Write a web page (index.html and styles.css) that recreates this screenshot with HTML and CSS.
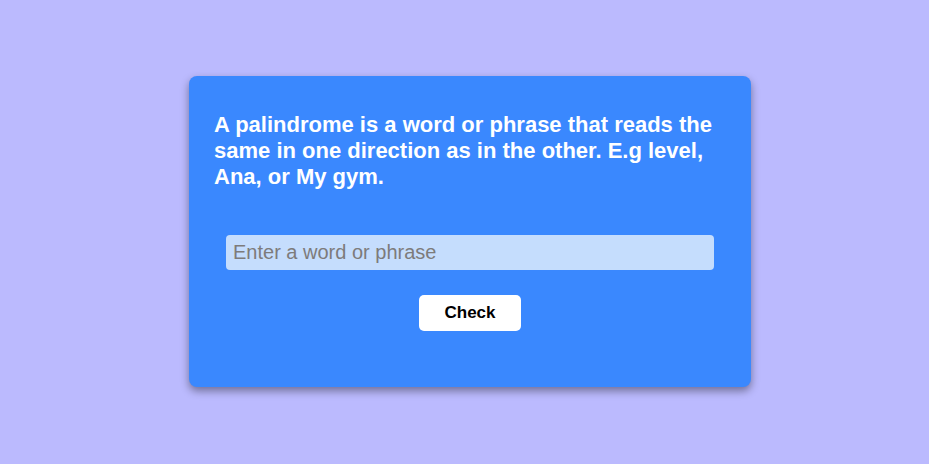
FILE: index.html
```html
<!DOCTYPE html>
<html>
<head>
<meta charset="utf-8">
<link rel="stylesheet" href="styles.css">
</head>
<body>
<div class="card">
  <p class="intro">A palindrome is a word or phrase that reads the same in one direction as in the other. E.g level, Ana, or My gym.</p>
  <input class="word-input" type="text" placeholder="Enter a word or phrase">
  <button class="check-btn">Check</button>
</div>
</body>
</html>
```
FILE: styles.css
```css
html, body {
  margin: 0;
  padding: 0;
  height: 100%;
}
body {
  background: #bbbafe;
  font-family: "Liberation Sans", Arial, sans-serif;
  display: flex;
  justify-content: center;
  align-items: flex-start;
  padding-left: 11px;
  box-sizing: border-box;
}
.card {
  margin-top: 76px;
  width: 562px;
  height: 311px;
  box-sizing: border-box;
  background: #3a88fe;
  border-radius: 8px;
  box-shadow: 0 4px 9px rgba(0, 0, 0, 0.4);
  padding: 36px 25px 0 25px;
  display: flex;
  flex-direction: column;
  align-items: center;
}
.intro {
  margin: 0;
  align-self: stretch;
  color: #ffffff;
  font-weight: bold;
  font-size: 22px;
  line-height: 26px;
}
.word-input {
  margin-top: 45px;
  width: 488px;
  height: 35px;
  box-sizing: border-box;
  border: none;
  outline: none;
  border-radius: 4px;
  background: #c5ddfd;
  padding: 0 7px;
  font-family: "Liberation Sans", Arial, sans-serif;
  font-size: 20px;
  color: #333;
}
.word-input::placeholder {
  color: #7d7b7b;
}
.check-btn {
  margin-top: 25px;
  width: 102px;
  height: 36px;
  border: none;
  border-radius: 5px;
  background: #ffffff;
  color: #000;
  font-family: "Liberation Sans", Arial, sans-serif;
  font-weight: bold;
  font-size: 17px;
  cursor: pointer;
}
```
